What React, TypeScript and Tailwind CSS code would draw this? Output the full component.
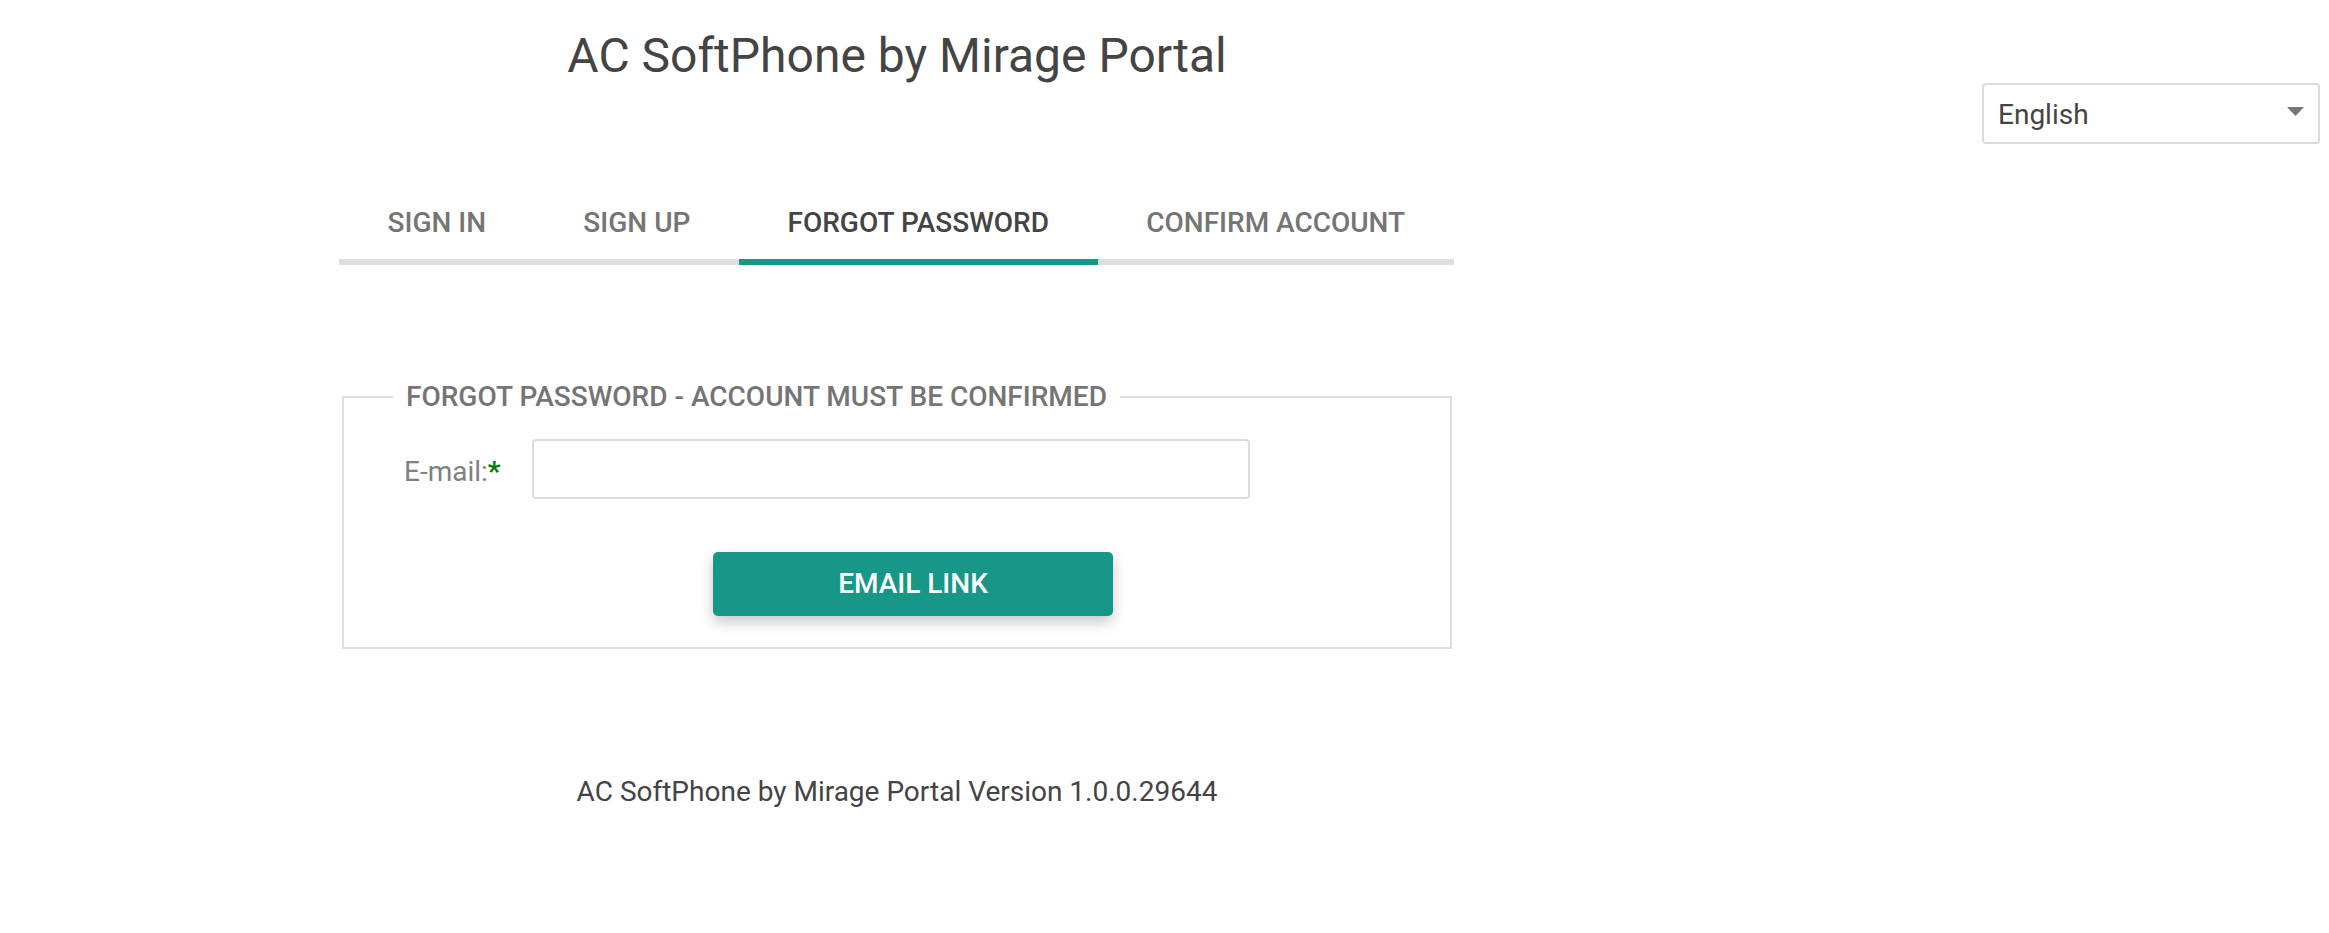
import { useState } from "react";

const tabs = ["SIGN IN", "SIGN UP", "FORGOT PASSWORD", "CONFIRM ACCOUNT"];

function LanguagePicker() {
  return (
    <div className="flex h-[61px] w-[338px] items-center justify-between rounded-[4px] border-2 border-[#dcdcdc] bg-white pl-[14px] pr-[14px]">
      <span className="mt-[3px] text-[28px] leading-[40px] text-[#444]">English</span>
      <svg width="17" height="9" viewBox="0 0 17 9" className="mt-[-5px]">
        <path d="M0 0 L17 0 L8.5 9 Z" fill="#757575" />
      </svg>
    </div>
  );
}

function Tabs({ active }: { active: number }) {
  return (
    <div className="mt-[119px] flex">
      {tabs.map((tab, i) => (
        <div
          key={tab}
          className={
            i === active
              ? "shrink-0 whitespace-nowrap border-b-[6px] border-[#179788] px-[48.6px] pb-[16px] text-[28px] font-medium leading-[40px] text-[#444]"
              : "shrink-0 whitespace-nowrap border-b-[6px] border-[#dedede] px-[48.6px] pb-[16px] text-[28px] font-medium leading-[40px] text-[#757575]"
          }
        >
          {tab}
        </div>
      ))}
    </div>
  );
}

function ForgotPasswordForm() {
  const [email, setEmail] = useState("");

  return (
    <fieldset className="mx-[3px] mt-[111px] border-2 border-[#dedede] pb-[31px] pt-[21px]">
      <legend className="ml-[49px] px-[13px] text-[28px] font-medium leading-[42px] text-[#757575]">
        FORGOT PASSWORD - ACCOUNT MUST BE CONFIRMED
      </legend>
      <div className="flex items-start pl-[60px]">
        <label className="mt-[12px] whitespace-nowrap text-[28px] leading-[42px] text-[#808080]">
          E-mail:<span className="font-bold text-[#008000]">*</span>
        </label>
        <input
          type="email"
          value={email}
          onChange={(e) => setEmail(e.target.value)}
          className="ml-[31px] h-[60px] w-[718px] rounded-[4px] border-2 border-[#dcdcdc] px-[14px] text-[28px] text-[#444] outline-none"
        />
      </div>
      <div className="mt-[53px] pl-[369px]">
        <button className="h-[64px] w-[400px] rounded-[5px] bg-[#179788] text-[28px] font-medium text-white shadow-[0_6px_14px_rgba(0,0,0,0.22)]">
          EMAIL LINK
        </button>
      </div>
    </fieldset>
  );
}

export default function App() {
  return (
    <div className="flex min-h-[933px] bg-white font-['Roboto',sans-serif]">
      <main className="ml-[339px] flex w-[1116px] shrink-0 flex-col">
        <h1 className="mt-[28px] whitespace-nowrap text-center text-[48px] font-normal leading-[56px] text-[#444]">
          AC SoftPhone by Mirage Portal
        </h1>
        <Tabs active={2} />
        <ForgotPasswordForm />
        <p className="mt-[122px] whitespace-nowrap text-center text-[28px] leading-[42px] text-[#444]">
          AC SoftPhone by Mirage Portal Version 1.0.0.29644
        </p>
      </main>
      <aside className="ml-auto pr-[9px] pt-[83px]">
        <LanguagePicker />
      </aside>
    </div>
  );
}
